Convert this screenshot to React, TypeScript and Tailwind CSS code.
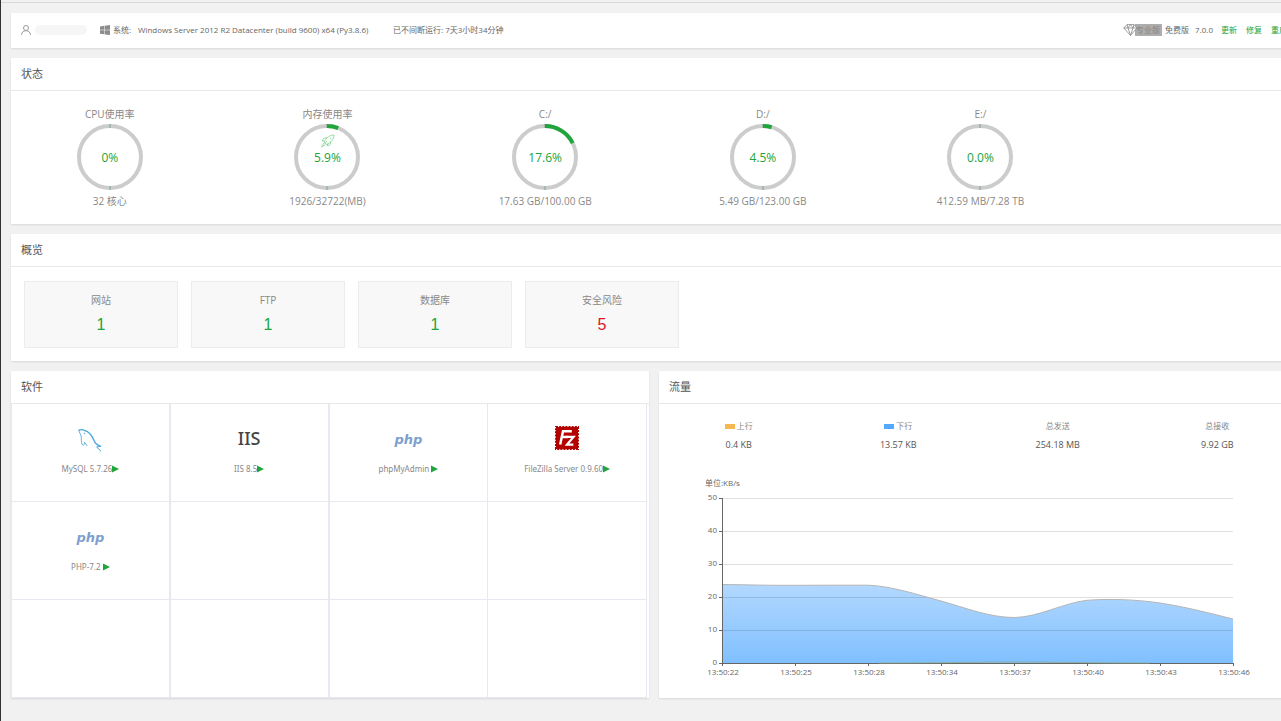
import type { ReactNode } from 'react';
import clsx from 'clsx';

interface Gauge {
    title: string;
    percent: number;
    label: string;
    detail: string;
    rocket?: boolean;
}

interface Software {
    name: string;
    icon: ReactNode;
}

const gauges: Gauge[] = [
    { title: 'CPU使用率', percent: 0, label: '0%', detail: '32 核心' },
    { title: '内存使用率', percent: 5.9, label: '5.9%', detail: '1926/32722(MB)', rocket: true },
    { title: 'C:/', percent: 17.6, label: '17.6%', detail: '17.63 GB/100.00 GB' },
    { title: 'D:/', percent: 4.5, label: '4.5%', detail: '5.49 GB/123.00 GB' },
    { title: 'E:/', percent: 0, label: '0.0%', detail: '412.59 MB/7.28 TB' },
];

const overview = [
    { title: '网站', value: 1 },
    { title: 'FTP', value: 1 },
    { title: '数据库', value: 1 },
    { title: '安全风险', value: 5, danger: true },
];

const traffic = [
    { title: '上行', value: '0.4 KB', swatch: 'bg-[#f7b851]' },
    { title: '下行', value: '13.57 KB', swatch: 'bg-[#52a9ff]' },
    { title: '总发送', value: '254.18 MB' },
    { title: '总接收', value: '9.92 GB' },
];

const times = ['13:50:22', '13:50:25', '13:50:28', '13:50:34', '13:50:37', '13:50:40', '13:50:43', '13:50:46'];

function MysqlIcon() {
    return (
        <svg className="h-6 w-6 overflow-visible" viewBox="0 0 24 24" fill="none" stroke="#4aa8d8" strokeLinecap="round" strokeLinejoin="round">
            <path d="M1 4.2C3 2.6 6 4.2 8.5 5.2C12.5 7 14.5 11 16 14.5C16.8 17 18.5 18.6 22.5 20.3" strokeWidth="1.3" />
            <path d="M22.5 20.3L18.6 21L22.8 25" strokeWidth="1" />
            <path d="M1 4.2C.8 6.2 2.8 8 3.2 10.5C3.4 13 3 16 4.2 18.5C5 20 6.2 19.4 6.5 16.2C7.5 17.5 8.3 18.8 9 19.6" strokeWidth="0.9" />
            <circle cx="6.3" cy="7.4" r=".5" strokeWidth="0.5" />
        </svg>
    );
}

function PhpIcon() {
    return (
        <span className="h-6 pt-1 font-['DejaVu_Sans',sans-serif] text-[13px] leading-5 font-bold text-[#7f9fd0] italic">php</span>
    );
}

function IisIcon() {
    return <span className="h-6 text-lg leading-6 font-medium text-[#444]">IIS</span>;
}

function FilezillaIcon() {
    return (
        <svg className="h-6 w-6" viewBox="0 0 24 24">
            <rect x="1" y="1" width="22" height="22" fill="#b30000" />
            <rect x="1" y="1" width="22" height="22" fill="none" stroke="#b30000" strokeWidth="2" strokeDasharray="2 1.14" />
            <path d="M5.2 18.5L8 5.3H16.8M7 11H13.2" fill="none" stroke="#fff" strokeWidth="2.5" />
            <path d="M11.2 10.8H18.6L12 18.6H18.4" fill="none" stroke="#fff" strokeWidth="2.2" />
        </svg>
    );
}

const software: Software[] = [
    { name: 'MySQL 5.7.26', icon: <MysqlIcon /> },
    { name: 'IIS 8.5', icon: <IisIcon /> },
    { name: 'phpMyAdmin ', icon: <PhpIcon /> },
    { name: 'FileZilla Server 0.9.60', icon: <FilezillaIcon /> },
    { name: 'PHP-7.2 ', icon: <PhpIcon /> },
];

function Card({ title, children }: { title: string; children: ReactNode }) {
    return (
        <section className="bg-white shadow-[0_1px_2px_rgba(0,0,0,0.1)]">
            <h2 className="flex h-[33px] items-center border-b border-[#e8e8ea] px-2.5 text-[11px] text-[#555]">{title}</h2>
            {children}
        </section>
    );
}

function TopBar() {
    return (
        <header className="flex h-[35px] items-center justify-between bg-white px-2.5 pb-0.5 text-[8px] text-[#666] shadow-[0_1px_2px_rgba(0,0,0,0.1)]">
            <div className="flex items-center">
                <svg className="h-2.5 w-2.5" viewBox="0 0 10 10" fill="none" stroke="#999">
                    <circle cx="5" cy="3" r="2.5" />
                    <path d="M.6 10C.6 7.2 2.4 5.7 5 5.7S9.4 7.2 9.4 10" />
                </svg>
                <span className="ml-1 h-2.5 w-[52px] rounded-full bg-[#f6f6f6]" />
                <svg className="ml-[13px] h-2.5 w-2.5" viewBox="0 0 10 10" fill="#8c8c8c">
                    <path d="M0 1.4L4.4.8V4.8H0ZM4.9.7L10 0V4.8H4.9ZM0 5.3H4.4V9.3L0 8.7ZM4.9 5.3H10V10L4.9 9.4Z" />
                </svg>
                <span className="ml-[3px] w-[25px]">系统:</span>
                <span className="min-w-[239px]">Windows Server 2012 R2 Datacenter (build 9600) x64 (Py3.8.6)</span>
                <span className="ml-4">已不间断运行: 7天3小时34分钟</span>
            </div>
            <div className="flex items-center">
                <svg className="z-10 -mr-2 h-3 w-5" viewBox="0 0 20 12" fill="#fff" stroke="#888" strokeWidth="0.8" strokeLinejoin="round">
                    <path d="M4 .6H11L14 4L7.5 11.4L.8 4Z" />
                    <path d="M.8 4H14M4 .6L5 4L7.5 11.4L10 4L11 .6M5 4L7.5 .6L10 4" fill="none" />
                </svg>
                <span className="flex h-3 w-[27px] items-center justify-end bg-[#adadad] pr-0.5 text-[#858585]">专业版</span>
                <span className="ml-[3px]">免费版</span>
                <span className="mx-2 ml-1.5">7.0.0</span>
                <nav className="flex gap-[9px] text-[#20a53a]">
                    <a href="#update">更新</a>
                    <a href="#repair">修复</a>
                    <a href="#restart">重启</a>
                </nav>
            </div>
        </header>
    );
}

function GaugeItem({ gauge }: { gauge: Gauge }) {
    return (
        <li className="flex flex-col items-center text-[10px] leading-[14px] text-[#888]">
            <h3>{gauge.title}</h3>
            <div className="relative mt-[3px] flex h-[66px] w-[66px] items-center justify-center pt-0.5">
                <svg className="absolute inset-0" viewBox="0 0 66 66" fill="none" strokeWidth="4">
                    <circle cx="33" cy="33" r="31" stroke="#ccc" />
                    <path d="M33 0V4M33 62V66" stroke="#7fa587" strokeWidth="1" />
                    {gauge.percent > 0 && (
                        <circle
                            cx="33"
                            cy="33"
                            r="31"
                            stroke="#20a53a"
                            pathLength="100"
                            strokeDasharray={`${gauge.percent} 100`}
                            transform="rotate(-90 33 33)"
                        />
                    )}
                    {gauge.rocket && (
                        <g stroke="#7fd08f" strokeWidth="0.8" strokeLinejoin="round">
                            <path d="M40 11C36 11 32.5 13.5 30 18L32.5 20.5C37 18.5 40 15 40 11Z" />
                            <path d="M33 13.5L29.5 14.5L28 17L30.5 17M37 17.5L36 20.5L33.5 22V19.8M30 19L27.5 22.8L31.5 20.8M36 14L37 15M33 17L31 19.5" />
                        </g>
                    )}
                </svg>
                <span className="text-xs text-[#20a53a]">{gauge.label}</span>
            </div>
            <p className="mt-1">{gauge.detail}</p>
        </li>
    );
}

function SoftwareCell({ item }: { item?: Software }) {
    return (
        <li className="flex h-[98px] flex-col items-center border-r border-b border-[#e8e8f0] pt-[22px] nth-[4n+1]:border-r-2 nth-[4n+2]:border-r-2">
            {item && (
                <>
                    {item.icon}
                    <a href="#software" className="mt-3 flex items-center text-[8px] leading-[14px] whitespace-pre text-[#888]">
                        {item.name}
                        <svg className="h-2 w-[7px]" viewBox="0 0 7 8" fill="#20a53a">
                            <path d="M0 .5L7 4L0 7.5Z" />
                        </svg>
                    </a>
                </>
            )}
        </li>
    );
}

function TrafficChart() {
    const left = 63;
    const right = 574;
    const bottom = 193;
    const curve = 'M63 114.5C88 114.8 112 115.5 136 115.3C160 115.3 185 115 209 115.2C232 116 258 124.5 282 131C307 138 331 147.5 355 147.5C379 147.5 404 133 428 130.3C452 128.5 476 129.5 501 133C525 136.5 550 143 574 149';

    return (
        <svg className="mt-[18px] block w-full" viewBox="0 0 638 228" fontSize="8" fill="#666">
            <defs>
                <linearGradient id="down" x1="0" y1="0" x2="0" y2="1">
                    <stop offset="0" stopColor="#b2d8ff" />
                    <stop offset="1" stopColor="#80c0ff" />
                </linearGradient>
            </defs>
            <text x="46" y="16">单位:KB/s</text>
            <path d={`${curve}V${bottom}H${left}Z`} fill="url(#down)" />
            {[50, 40, 30, 20, 10, 0].map((tick, i) => {
                const y = 28 + i * 33;
                return (
                    <g key={tick}>
                        {tick > 0 && <path d={`M${left} ${y + 0.5}H${right}`} stroke="#000" strokeOpacity="0.12" />}
                        <path d={`M${left - 3} ${y + 0.5}H${left}`} stroke="#666" />
                        <text x="58" y={y + 2} textAnchor="end">{tick}</text>
                    </g>
                );
            })}
            <path d={curve} fill="none" stroke="#b5b5b5" />
            <path d="M63.5 28V194M63 193.5H574" fill="none" stroke="#666" />
            <path d="M220 193C290 193 320 192 355 192S430 193 490 193" fill="none" stroke="#8aa98c" strokeWidth="0.8" />
            {times.map((time, i) => {
                const x = left + i * 73;
                return (
                    <g key={time}>
                        <path d={`M${x + 0.5} 193V196`} stroke="#666" />
                        <text x={x + 1} y="205" textAnchor="middle">{time}</text>
                    </g>
                );
            })}
        </svg>
    );
}

export default function App() {
    return (
        <div className="min-h-screen overflow-hidden border-l border-[#333] bg-[#f1f1f1] pt-0.5 font-['Open_Sans','Noto_Sans_CJK_SC',sans-serif]">
            {/* content runs a little past the right edge of the window */}
            <main className="flex w-[calc(100%+16px)] flex-col gap-2.5 border-t border-[#d8d8d8] pt-2.5 pl-2.5">
                <TopBar />

                <Card title="状态">
                    <ul className="-mx-2.5 grid grid-cols-6 py-4">
                        {gauges.map((gauge) => (
                            <GaugeItem key={gauge.title} gauge={gauge} />
                        ))}
                    </ul>
                </Card>

                <Card title="概览">
                    <ul className="flex gap-[13px] px-[13px] pt-3.5 pb-[13px]">
                        {overview.map((item) => (
                            <li key={item.title} className="h-[67px] w-[154px] border border-[#ececec] bg-[#f8f8f8] pt-[11px] text-center">
                                <h3 className="text-[10px] leading-[14px] text-[#888]">{item.title}</h3>
                                <a
                                    href="#detail"
                                    className={clsx(
                                        "mt-2 block font-['Liberation_Sans',sans-serif] text-base leading-5",
                                        item.danger ? 'text-[#e0102a]' : 'text-[#20a53a]'
                                    )}
                                >
                                    {item.value}
                                </a>
                            </li>
                        ))}
                    </ul>
                </Card>

                <div className="grid grid-cols-2 gap-2.5">
                    <Card title="软件">
                        <ul className="mr-0.5 grid grid-cols-4 border-l border-[#e8e8f0] font-['Noto_Sans','Noto_Sans_CJK_SC',sans-serif]">
                            {Array.from({ length: 12 }, (_, i) => (
                                <SoftwareCell key={i} item={software[i]} />
                            ))}
                        </ul>
                    </Card>

                    <Card title="流量">
                        <ul className="grid grid-cols-4 pt-[15px] text-center leading-[14px]">
                            {traffic.map((item) => (
                                <li key={item.title}>
                                    <h3 className="flex items-center justify-center gap-0.5 text-[8px] text-[#888]">
                                        {item.swatch && <span className={clsx('h-[5px] w-2.5', item.swatch)} />}
                                        {item.title}
                                    </h3>
                                    <p className="mt-[5px] text-[9px] text-[#555]">{item.value}</p>
                                </li>
                            ))}
                        </ul>
                        <TrafficChart />
                    </Card>
                </div>
            </main>
        </div>
    );
}
